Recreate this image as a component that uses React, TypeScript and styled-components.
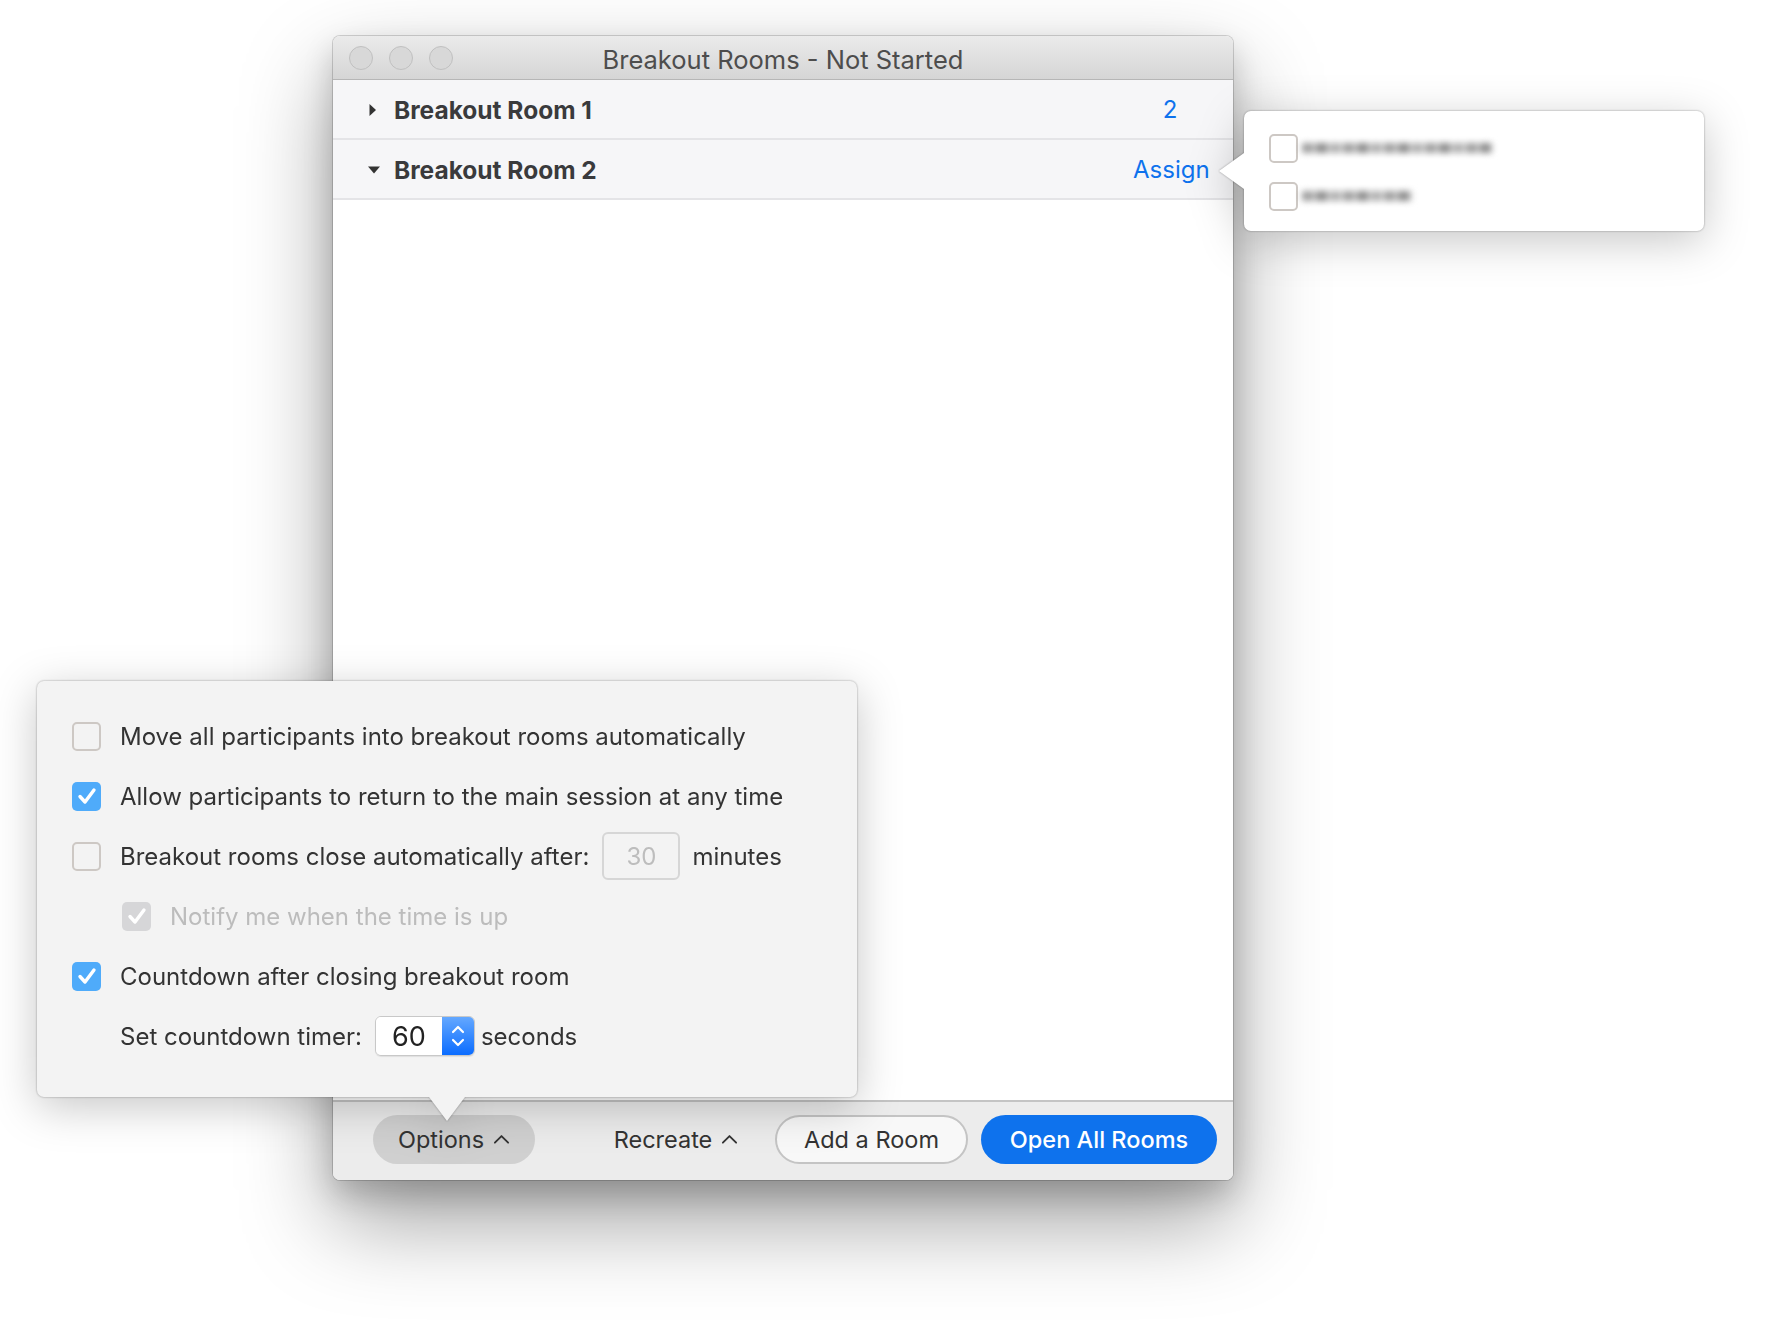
import React from "react";
import styled, { createGlobalStyle, css } from "styled-components";

const GlobalStyle = createGlobalStyle`
  html, body { margin: 0; padding: 0; background: #ffffff; }
  body { font-family: Inter, "Open Sans", "Liberation Sans", sans-serif; -webkit-font-smoothing: antialiased; }
  * { box-sizing: border-box; }
`;

const Stage = styled.div`
  position: relative;
  width: 1775px;
  height: 1328px;
  overflow: hidden;
  padding: 36px 0 0 333px;
`;

const Window = styled.div`
  width: 900px;
  height: 1144px;
  display: flex;
  flex-direction: column;
  border-radius: 7px;
  background: #ffffff;
  overflow: hidden;
  box-shadow: 0 0 0 1px rgba(0, 0, 0, 0.16), 0 14px 30px rgba(0, 0, 0, 0.18),
    0 40px 90px rgba(0, 0, 0, 0.38);
`;

const TitleBar = styled.div`
  height: 44px;
  flex-shrink: 0;
  display: grid;
  grid-template-columns: 1fr auto 1fr;
  align-items: center;
  background: linear-gradient(#ebebeb, #d5d5d5);
  border-bottom: 1px solid #b6b6b6;
`;

const Lights = styled.div`
  display: flex;
  gap: 16px;
  padding-left: 16px;
`;

const Light = styled.span`
  width: 24px;
  height: 24px;
  border-radius: 50%;
  background: #d8d8d8;
  border: 1px solid #c0c0c0;
`;

const Title = styled.div`
  font-size: 25.5px;
  color: #4d4d4d;
  padding-top: 3px;
`;

const RoomRow = styled.div`
  height: 60px;
  flex-shrink: 0;
  display: flex;
  align-items: center;
  padding: 1px 26px 0 35px;
  background: #f6f6f8;
  border-bottom: 2px solid #e4e4e7;
`;

const Caret = styled.span`
  width: 12px;
  height: 14px;
  display: flex;
  align-items: center;
  justify-content: flex-start;
  margin-right: 14px;
`;

const RoomName = styled.div`
  flex: 1;
  font-size: 24.5px;
  font-weight: 700;
  color: #3a3a3c;
`;

const RoomAction = styled.div`
  width: 74px;
  text-align: center;
  font-size: 24px;
  color: #0e72ed;
`;

const Body = styled.div`
  flex: 1;
  background: #ffffff;
`;

const Footer = styled.div`
  height: 80px;
  flex-shrink: 0;
  display: flex;
  align-items: center;
  gap: 13px;
  padding: 0 16px 4px 40px;
  background: #ececec;
  border-top: 2px solid #c4c4c4;
`;

const FooterButton = styled.button<{ $variant: "menu" | "plain" | "outline" | "primary" }>`
  height: 49px;
  border-radius: 25px;
  display: flex;
  align-items: center;
  justify-content: center;
  gap: 9px;
  font-family: inherit;
  font-size: 23.5px;
  color: #333333;
  border: none;
  padding: 0;
  ${(p) =>
    p.$variant === "menu" &&
    css`
      width: 162px;
      background: #d0d0d0;
      margin-right: 42px;
    `}
  ${(p) =>
    p.$variant === "plain" &&
    css`
      width: 172px;
      background: transparent;
    `}
  ${(p) =>
    p.$variant === "outline" &&
    css`
      width: 193px;
      background: #f8f8f8;
      border: 2px solid #c4c4c4;
    `}
  ${(p) =>
    p.$variant === "primary" &&
    css`
      width: 236px;
      background: #0e72ed;
      color: #ffffff;
      font-weight: 500;
    `}
`;

const Popover = styled.div`
  position: absolute;
  filter: drop-shadow(0 0 1px rgba(0, 0, 0, 0.35)) drop-shadow(0 10px 22px rgba(0, 0, 0, 0.22));
`;

const OptionsPopover = styled(Popover)`
  left: 37px;
  top: 681px;
  width: 820px;
  height: 416px;
  background: #f3f3f3;
  border-radius: 7px;
  padding: 25px 0 0 35px;
  &::after {
    content: "";
    position: absolute;
    left: 392px;
    bottom: -24px;
    border-left: 18px solid transparent;
    border-right: 18px solid transparent;
    border-top: 24px solid #f3f3f3;
  }
`;

const OptionRow = styled.div<{ $indent?: number }>`
  height: 60px;
  display: flex;
  align-items: center;
  padding-left: ${(p) => p.$indent ?? 0}px;
`;

const OptionLabel = styled.span<{ $disabled?: boolean; $gap?: number }>`
  font-size: 24px;
  color: ${(p) => (p.$disabled ? "#bcbcbc" : "#333333")};
  margin-left: ${(p) => p.$gap ?? 19}px;
  white-space: nowrap;
`;

const Box = styled.span<{ $checked?: boolean; $disabled?: boolean }>`
  width: 29px;
  height: 29px;
  flex-shrink: 0;
  border-radius: 5px;
  display: flex;
  align-items: center;
  justify-content: center;
  border: 2px solid #cdc8c4;
  background: transparent;
  ${(p) =>
    p.$checked &&
    css`
      border: none;
      background: ${p.$disabled ? "#d6d6d8" : "#4fabfa"};
    `}
`;

const MinutesField = styled.span`
  width: 78px;
  height: 48px;
  margin: 0 12px 0 13px;
  border: 2px solid #d6d6d6;
  border-radius: 6px;
  display: flex;
  align-items: center;
  justify-content: center;
  font-size: 24px;
  color: #bdbdbd;
`;

const Spinner = styled.span`
  height: 40px;
  display: flex;
  margin: 0 6px 0 13px;
  border-radius: 6px;
  overflow: hidden;
  border: 1px solid #c8c8c8;
  box-shadow: 0 1px 1px rgba(0, 0, 0, 0.08);
`;

const SpinnerValue = styled.span`
  width: 66px;
  background: #ffffff;
  display: flex;
  align-items: center;
  justify-content: center;
  font-size: 27px;
  color: #222222;
`;

const SpinnerStepper = styled.span`
  width: 32px;
  display: flex;
  align-items: center;
  justify-content: center;
  background: linear-gradient(#64a8ff, #0b6cff);
`;

const AssignPopover = styled(Popover)`
  left: 1244px;
  top: 111px;
  width: 460px;
  height: 120px;
  background: #ffffff;
  border-radius: 7px;
  padding: 13px 0 0 25px;
  &::before {
    content: "";
    position: absolute;
    left: -25px;
    top: 42px;
    border-top: 18px solid transparent;
    border-bottom: 18px solid transparent;
    border-right: 25px solid #ffffff;
  }
`;

const AssignRow = styled.div`
  height: 48px;
  display: flex;
  align-items: center;
`;

const BlurredName = styled.span`
  height: 18px;
  margin-left: 4px;
  border-radius: 3px;
  background: linear-gradient(#ffffff 0 22%, transparent 22% 78%, #ffffff 78%),
    repeating-linear-gradient(
      90deg,
      #8e8e8e 0 11px,
      #d0d0d0 11px 14px,
      #7a7a7a 14px 25px,
      #c4c4c4 25px 29px,
      #a0a0a0 29px 38px,
      #dadada 38px 41px
    );
  filter: blur(3px);
  opacity: 0.85;
`;

const Check = ({ color = "#ffffff" }: { color?: string }) => (
  <svg width="22" height="22" viewBox="0 0 22 22" fill="none">
    <path d="M4 11.5 L9 17 L18 5" stroke={color} strokeWidth="3.4" strokeLinecap="round" strokeLinejoin="round" />
  </svg>
);

const Checkbox = ({ checked, disabled }: { checked?: boolean; disabled?: boolean }) => (
  <Box $checked={checked} $disabled={disabled}>
    {checked && <Check />}
  </Box>
);

const Chevron = ({ size = 17, color = "#333" }: { size?: number; color?: string }) => (
  <svg width={size} height={size * 0.6} viewBox="0 0 16 10" fill="none">
    <path d="M1.5 8.5 L8 2 L14.5 8.5" stroke={color} strokeWidth="1.8" strokeLinecap="round" strokeLinejoin="round" />
  </svg>
);

const CaretRight = () => (
  <svg width="9" height="14" viewBox="0 0 9 14">
    <path d="M1.5 1 L8 7 L1.5 13 Z" fill="#333" />
  </svg>
);

const CaretDown = () => (
  <svg width="12" height="8" viewBox="0 0 12 8">
    <path d="M0 0.5 L12 0.5 L6 7.5 Z" fill="#333" />
  </svg>
);

const Stepper = () => (
  <svg width="16" height="30" viewBox="0 0 16 30" fill="none">
    <path d="M3 11 L8 6 L13 11" stroke="#fff" strokeWidth="2.2" strokeLinecap="round" strokeLinejoin="round" />
    <path d="M3 19 L8 24 L13 19" stroke="#fff" strokeWidth="2.2" strokeLinecap="round" strokeLinejoin="round" />
  </svg>
);

export default function App() {
  return (
    <>
      <GlobalStyle />
      <Stage>
        <Window>
          <TitleBar>
            <Lights>
              <Light />
              <Light />
              <Light />
            </Lights>
            <Title>Breakout Rooms - Not Started</Title>
            <span />
          </TitleBar>
          <RoomRow>
            <Caret>
              <CaretRight />
            </Caret>
            <RoomName>Breakout Room 1</RoomName>
            <RoomAction>2</RoomAction>
          </RoomRow>
          <RoomRow>
            <Caret>
              <CaretDown />
            </Caret>
            <RoomName>Breakout Room 2</RoomName>
            <RoomAction>Assign</RoomAction>
          </RoomRow>
          <Body />
          <Footer>
            <FooterButton $variant="menu">
              Options <Chevron />
            </FooterButton>
            <FooterButton $variant="plain">
              Recreate <Chevron />
            </FooterButton>
            <FooterButton $variant="outline">Add a Room</FooterButton>
            <FooterButton $variant="primary">Open All Rooms</FooterButton>
          </Footer>
        </Window>

        <OptionsPopover>
          <OptionRow>
            <Checkbox />
            <OptionLabel>Move all participants into breakout rooms automatically</OptionLabel>
          </OptionRow>
          <OptionRow>
            <Checkbox checked />
            <OptionLabel>Allow participants to return to the main session at any time</OptionLabel>
          </OptionRow>
          <OptionRow>
            <Checkbox />
            <OptionLabel>Breakout rooms close automatically after:</OptionLabel>
            <MinutesField>30</MinutesField>
            <OptionLabel $gap={0}>minutes</OptionLabel>
          </OptionRow>
          <OptionRow $indent={50}>
            <Checkbox checked disabled />
            <OptionLabel $disabled $gap={19}>
              Notify me when the time is up
            </OptionLabel>
          </OptionRow>
          <OptionRow>
            <Checkbox checked />
            <OptionLabel>Countdown after closing breakout room</OptionLabel>
          </OptionRow>
          <OptionRow $indent={48}>
            <OptionLabel $gap={0}>Set countdown timer:</OptionLabel>
            <Spinner>
              <SpinnerValue>60</SpinnerValue>
              <SpinnerStepper>
                <Stepper />
              </SpinnerStepper>
            </Spinner>
            <OptionLabel $gap={0}>seconds</OptionLabel>
          </OptionRow>
        </OptionsPopover>

        <AssignPopover>
          <AssignRow>
            <Checkbox />
            <BlurredName style={{ width: 190 }} />
          </AssignRow>
          <AssignRow>
            <Checkbox />
            <BlurredName style={{ width: 110 }} />
          </AssignRow>
        </AssignPopover>
      </Stage>
    </>
  );
}
